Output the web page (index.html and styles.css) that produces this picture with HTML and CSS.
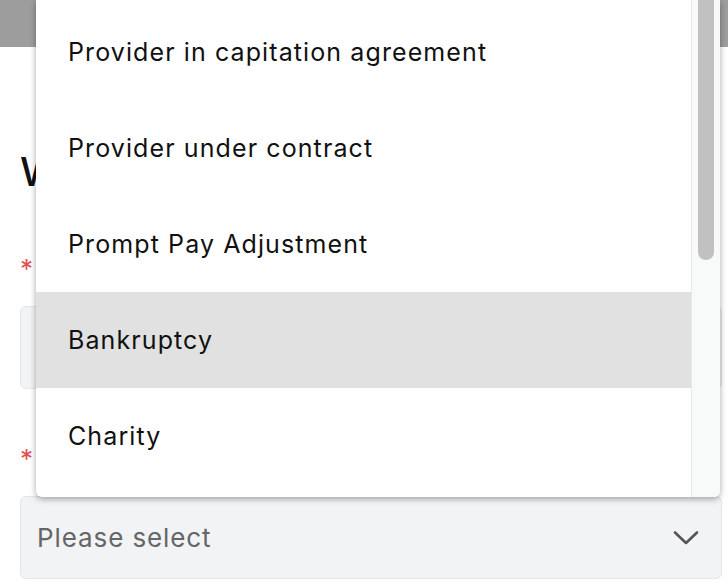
FILE: index.html
```html
<!DOCTYPE html>
<html lang="en">
<head>
<meta charset="utf-8">
<title>Write-off form</title>
<link rel="stylesheet" href="styles.css">
</head>
<body>
<header class="topbar"></header>
<main class="form">
  <h1 class="title">Write-off details</h1>
  <div class="field">
    <label class="label"><span class="req">*</span> Adjustment reason</label>
    <div class="input"></div>
  </div>
  <div class="field field-second">
    <label class="label"><span class="req">*</span> Adjustment type</label>
    <div class="select">
      <span class="placeholder">Please select</span>
      <svg class="chev" width="26" height="16" viewBox="0 0 26 16"><path d="M2 2.5 L13 13 L24 2.5" fill="none" stroke="#555" stroke-width="2.6" stroke-linecap="round" stroke-linejoin="round"/></svg>
    </div>
  </div>
</main>
<div class="menu">
  <ul class="options">
    <li class="option">Provider in capitation agreement</li>
    <li class="option">Provider under contract</li>
    <li class="option">Prompt Pay Adjustment</li>
    <li class="option option-active">Bankruptcy</li>
    <li class="option">Charity</li>
    <li class="option">Deceased</li>
  </ul>
  <div class="track"><div class="thumb"></div></div>
</div>
</body>
</html>
```
FILE: styles.css
```css
html, body {
  margin: 0;
  padding: 0;
  background: #ffffff;
  font-family: Inter, "Noto Sans", sans-serif;
  overflow: hidden;
}
.topbar {
  height: 47px;
  background: #9d9d9d;
}
.form {
  padding: 0 6px 0 20px;
}
.title {
  margin: 101px 0 0;
  font-size: 40px;
  line-height: 48px;
  font-weight: 500;
  color: #111;
}
.field {
  margin-top: 57px;
  display: flex;
  flex-direction: column;
  gap: 21px;
}
.field-second {
  margin-top: 54px;
}
.label {
  font-size: 26px;
  line-height: 32px;
  color: #111;
}
.req {
  color: #e05151;
}
.input {
  height: 81px;
  background: #f2f3f5;
  border: 1px solid #e3e5e8;
  border-radius: 6px;
}
.select {
  height: 81px;
  background: #f2f3f5;
  border: 1px solid #e3e5e8;
  border-radius: 6px;
  display: flex;
  align-items: center;
  justify-content: space-between;
  padding: 0 22px 0 16px;
}
.placeholder {
  font-size: 26px;
  letter-spacing: 0.9px;
  color: #666;
}
.menu {
  position: absolute;
  left: 36px;
  top: 0;
  width: 684px;
  height: 497px;
  background: #fff;
  border-radius: 0 0 6px 6px;
  box-shadow: 0 2px 6px rgba(0, 0, 0, 0.35);
  display: flex;
  overflow: hidden;
}
.options {
  list-style: none;
  margin: 4px 0 0;
  padding: 0;
  flex: 1;
}
.option {
  height: 96px;
  display: flex;
  align-items: center;
  padding-left: 32px;
  font-size: 25px;
  letter-spacing: 1.1px;
  color: #111;
}
.option-active {
  background: #e1e1e1;
}
.track {
  width: 28px;
  background: #f8f9f9;
  border-left: 1px solid #e8e8e8;
  display: flex;
  justify-content: center;
}
.thumb {
  width: 16px;
  height: 270px;
  margin-top: -10px;
  background: #c1c1c1;
  border-radius: 8px;
}
```
